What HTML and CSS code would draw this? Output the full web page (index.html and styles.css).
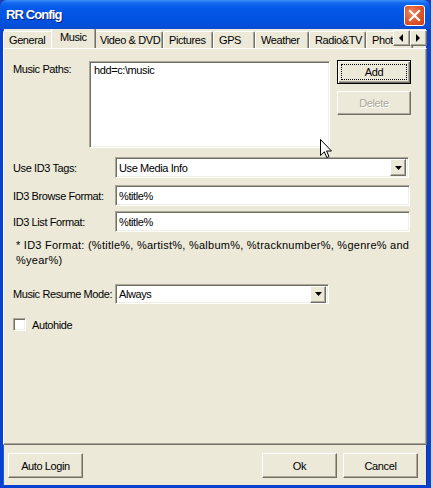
FILE: index.html
```html
<!DOCTYPE html>
<html>
<head>
<meta charset="utf-8">
<title>RR Config</title>
<link rel="stylesheet" href="styles.css">
</head>
<body>
<div class="window">
  <div class="titlebar">
    <span class="title">RR Config</span>
    <div class="close"><svg width="13" height="13" viewBox="0 0 13 13"><path d="M2 2 L11 11 M11 2 L2 11" stroke="#fff" stroke-width="2.2" stroke-linecap="square"/></svg></div>
  </div>
  <div class="frame">
    <div class="tabs">
      <div class="tab w-general">General</div>
      <div class="tab selected w-music">Music</div>
      <div class="tab w-video">Video &amp; DVD</div>
      <div class="tab w-pictures">Pictures</div>
      <div class="tab w-gps">GPS</div>
      <div class="tab w-weather">Weather</div>
      <div class="tab w-radio">Radio&amp;TV</div>
      <div class="tab w-pho">Photo</div>
      <div class="scroller">
        <div class="sbtn"><svg width="5" height="8" viewBox="0 0 5 8"><path d="M4 0 L0 4 L4 8 Z" fill="#000"/></svg></div>
        <div class="sbtn"><svg width="5" height="8" viewBox="0 0 5 8"><path d="M0 0 L4 4 L0 8 Z" fill="#000"/></svg></div>
      </div>
    </div>
    <div class="panel">
      <div class="row paths">
        <div class="label lbl-paths">Music Paths:</div>
        <div class="sunken textarea">hdd=c:\music</div>
        <div class="btncol">
          <div class="btn default"><span class="focus">Add</span></div>
          <div class="btn disabled">Delete</div>
        </div>
      </div>
      <div class="row r-tags">
        <div class="label lbl-wide">Use ID3 Tags:</div>
        <div class="sunken select sel-tags"><span class="seltext">Use Media Info</span><span class="dd"><svg width="7" height="4" viewBox="0 0 7 4"><path d="M0 0 H7 L3.5 4 Z" fill="#000"/></svg></span></div>
      </div>
      <div class="row r-browse">
        <div class="label lbl-wide">ID3 Browse Format:</div>
        <div class="sunken input">%title%</div>
      </div>
      <div class="row r-list">
        <div class="label lbl-wide">ID3 List Format:</div>
        <div class="sunken input">%title%</div>
      </div>
      <div class="note">* ID3 Format: (%title%, %artist%, %album%, %tracknumber%, %genre% and<br>%year%)</div>
      <div class="row r-resume">
        <div class="label lbl-wide">Music Resume Mode:</div>
        <div class="sunken select sel-resume"><span class="seltext">Always</span><span class="dd"><svg width="7" height="4" viewBox="0 0 7 4"><path d="M0 0 H7 L3.5 4 Z" fill="#000"/></svg></span></div>
      </div>
      <div class="row r-check">
        <div class="sunken checkbox"></div>
        <div class="label">Autohide</div>
      </div>
      <svg class="cursor" width="13" height="21" viewBox="0 0 13 21"><path d="M0.5 0.5 L0.5 16.5 L4.3 12.8 L6.8 18.6 L9 17.6 L6.6 12 L11.5 12 Z" fill="#fff" stroke="#000" stroke-width="1" stroke-linejoin="miter"/></svg>
    </div>
    <div class="bottom">
      <div class="btn b-auto">Auto Login</div>
      <div class="spacer"></div>
      <div class="btn b-ok">Ok</div>
      <div class="btn b-cancel">Cancel</div>
    </div>
  </div>
</div>
</body>
</html>
```
FILE: styles.css
```css
html, body {
  margin: 0;
  padding: 0;
}
body {
  width: 433px;
  height: 488px;
  overflow: hidden;
  background: linear-gradient(90deg, #1c3fb8 0, #1c3fb8 431px, #c9d3e6 431px);
  font-family: "Liberation Sans", Arial, sans-serif;
  font-size: 11px;
  letter-spacing: -0.4px;
  color: #000;
}
.window {
  width: 430px;
  height: 488px;
  display: flex;
  flex-direction: column;
}
.titlebar {
  height: 29px;
  flex: none;
  display: flex;
  align-items: center;
  padding: 0 5px 0 6px;
  border-radius: 7px 7px 0 0;
  background: linear-gradient(180deg, #3c8ef6 0, #1468f0 3px, #0459e8 8px, #0254e3 16px, #0250dc 24px, #0a4bd0 29px);
}
.title {
  flex: 1;
  color: #fff;
  font-weight: bold;
  font-size: 13px;
  letter-spacing: -0.9px;
  text-shadow: 1px 1px 0 #0a1f7a;
  padding-bottom: 1px;
}
.close {
  width: 19px;
  height: 19px;
  border: 1px solid #fff;
  border-radius: 3px;
  display: flex;
  align-items: center;
  justify-content: center;
  background: radial-gradient(circle at 35% 35%, #f08a60 0, #e05a30 45%, #c83c18 100%);
  margin-top: 1px;
}
.frame {
  flex: 1;
  display: flex;
  flex-direction: column;
  background: #ece9d8;
  border-left: 3px solid #0841d0;
  border-right: 3px solid #0841d0;
  border-bottom: 3px solid #0841d0;
  box-shadow: inset 1px 0 #1a5be8, inset -1px 0 #0732a8;
}
.tabs {
  height: 19px;
  flex: none;
  display: flex;
  align-items: flex-end;
  position: relative;
  overflow: hidden;
}
.tab {
  height: 16px;
  line-height: 16px;
  padding-left: 5px;
  border-top: 1px solid #fff;
  border-left: 1px solid #fff;
  border-right: 1px solid #716f64;
  box-shadow: inset -1px 0 #aca899;
  border-radius: 2px 2px 0 0;
  white-space: nowrap;
  overflow: hidden;
  box-sizing: content-box;
  flex: none;
}
.tab.selected {
  line-height: 17px;
  margin: 0 -2px -1px -2px;
  padding-left: 8px;
  position: relative;
  z-index: 1;
  background: #ece9d8;
  height: 20px;
}
.w-general { width: 43px; }
.w-music { width: 35px; }
.w-video { width: 62px; }
.w-pictures { width: 43px; }
.w-gps { width: 35px; }
.w-weather { width: 47px; }
.w-radio { width: 50px; }
.w-pho { width: 40px; }
.scroller {
  position: absolute;
  right: 0;
  top: 1px;
  display: flex;
  z-index: 2;
}
.sbtn {
  width: 15px;
  height: 14px;
  background: #ece9d8;
  border: 1px solid;
  border-color: #fff #716f64 #716f64 #fff;
  box-shadow: inset -1px -1px #aca899;
  display: flex;
  align-items: center;
  justify-content: center;
}
.panel {
  flex: none;
  position: relative;
  border: 1px solid;
  border-color: #fff #716f64 #716f64 #fff;
  box-shadow: inset -1px -1px #aca899;
  padding: 12px 0 0 9px;
  box-sizing: border-box;
  height: 397px;
}
.row {
  display: flex;
  align-items: center;
}
.label {
  white-space: nowrap;
}
.lbl-paths {
  width: 76px;
  align-self: flex-start;
  padding-top: 2px;
}
.lbl-wide {
  width: 102px;
}
.paths {
  align-items: flex-start;
}
.sunken {
  background: #fff;
  border: 1px solid;
  border-color: #aca899 #fff #fff #aca899;
  box-shadow: inset 1px 1px #716f64, inset -1px -1px #f1efe2;
  box-sizing: border-box;
}
.textarea {
  width: 241px;
  height: 87px;
  padding: 2px 4px;
}
.btncol {
  margin-left: 7px;
  margin-top: -1px;
  display: flex;
  flex-direction: column;
  gap: 7px;
}
.btn {
  width: 74px;
  height: 24px;
  box-sizing: border-box;
  background: #ece9d8;
  border: 1px solid;
  border-color: #fff #716f64 #716f64 #fff;
  box-shadow: inset -1px -1px #aca899;
  display: flex;
  align-items: center;
  justify-content: center;
}
.btn.default {
  border: 1px solid #000;
  box-shadow: inset 1px 1px #fff, inset -1px -1px #716f64, inset -2px -2px #aca899;
}
.focus {
  width: 66px;
  height: 16px;
  line-height: 16px;
  text-align: center;
  outline: 1px dotted #000;
  outline-offset: -1px;
}
.btn.disabled {
  color: #aca899;
  text-shadow: 1px 1px 0 #fff;
}
.r-tags { margin-top: 9px; }
.r-browse { margin-top: 7px; }
.r-list { margin-top: 5px; }
.select {
  height: 21px;
  display: flex;
  align-items: center;
  padding: 2px 2px 2px 3px;
}
.seltext {
  flex: 1;
}
.dd {
  width: 16px;
  height: 17px;
  box-sizing: border-box;
  background: #ece9d8;
  border: 1px solid;
  border-color: #fff #716f64 #716f64 #fff;
  box-shadow: inset -1px -1px #aca899;
  display: flex;
  align-items: center;
  justify-content: center;
}
.sel-tags { width: 294px; }
.sel-resume { width: 214px; height: 20px; }
.input {
  width: 295px;
  height: 21px;
  line-height: 17px;
  padding: 2px 3px;
}
.note {
  margin-top: 6px;
  padding-left: 3px;
  line-height: 15px;
  letter-spacing: 0.25px;
}
.r-resume { margin-top: 16px; }
.r-check { margin-top: 14px; }
.checkbox {
  width: 13px;
  height: 13px;
  margin-right: 6px;
}
.cursor {
  position: absolute;
  left: 316px;
  top: 90px;
}
.bottom {
  flex: 1;
  display: flex;
  align-items: flex-start;
  padding: 8px 9px 0 5px;
  gap: 6px;
}
.bottom .btn {
  height: 25px;
  width: 75px;
}
.spacer { flex: 1; }
```
